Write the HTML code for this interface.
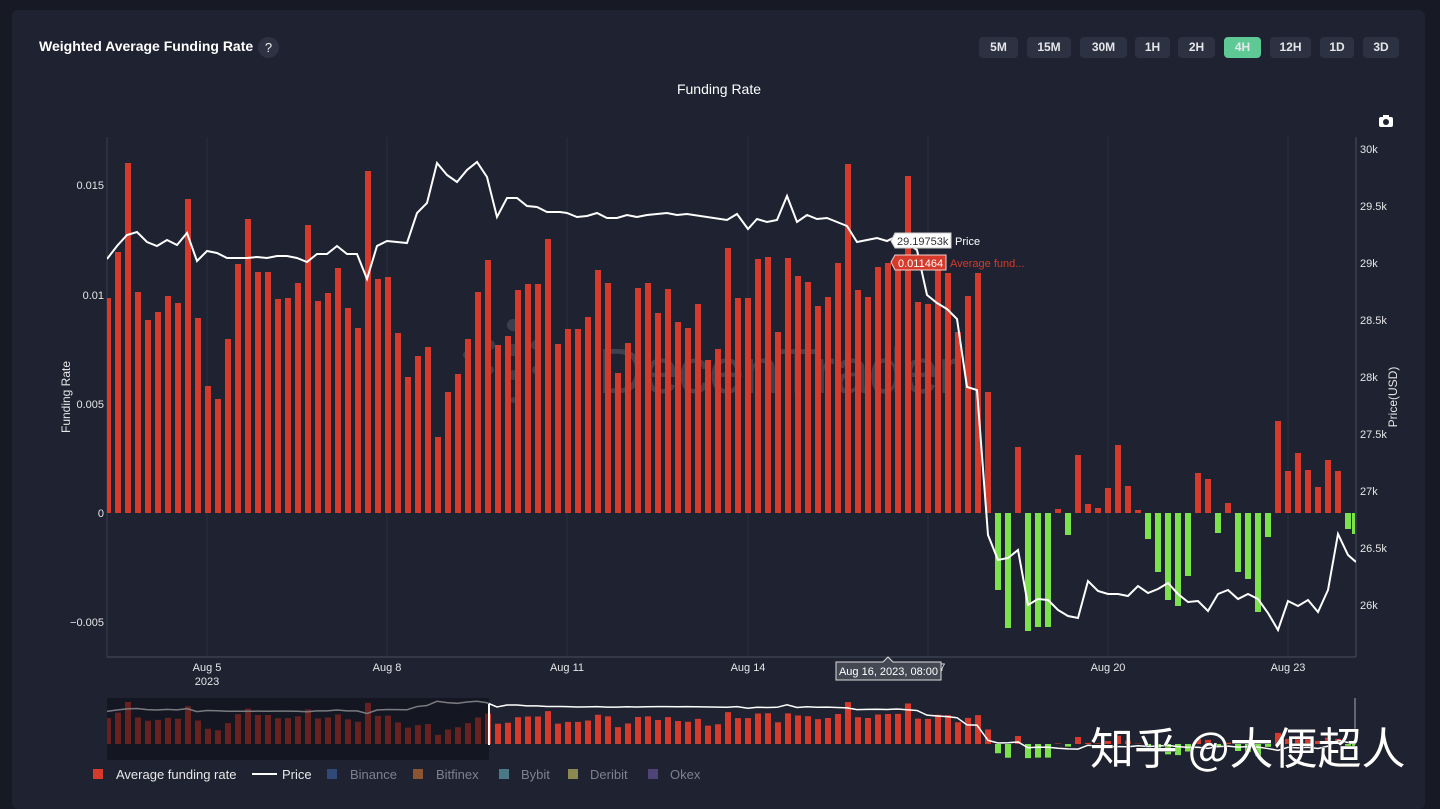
<!DOCTYPE html>
<html><head><meta charset="utf-8"><style>
body{margin:0;width:1440px;height:809px;background:#171a25;overflow:hidden;font-family:"Liberation Sans",sans-serif}
.panel{position:absolute;left:12px;top:10px;width:1413px;height:799px;background:#1e2231;border-radius:6px}
.h{position:absolute;left:39px;top:38px;color:#fff;font-weight:bold;font-size:14px}
.q{position:absolute;left:258px;top:37px;width:21px;height:21px;border-radius:50%;background:#2e3344;color:#eee;font-size:13px;text-align:center;line-height:21px}
.b{position:absolute;top:37px;height:21px;background:#2d3242;border-radius:4px;color:#e4e6ea;font-size:12px;font-weight:bold;text-align:center;line-height:21px}
.b.on{background:#5fc996}
svg{position:absolute;left:0;top:0}
</style></head><body>
<div class="panel"></div>
<div class="h">Weighted Average Funding Rate</div><div class="q">?</div>
<div class="b" style="left:979px;width:39px">5M</div>
<div class="b" style="left:1027px;width:44px">15M</div>
<div class="b" style="left:1080px;width:47px">30M</div>
<div class="b" style="left:1135px;width:35px">1H</div>
<div class="b" style="left:1178px;width:37px">2H</div>
<div class="b on" style="left:1224px;width:37px">4H</div>
<div class="b" style="left:1270px;width:41px">12H</div>
<div class="b" style="left:1320px;width:34px">1D</div>
<div class="b" style="left:1363px;width:36px">3D</div>
<svg width="1440" height="809" viewBox="0 0 1440 809" font-family="Liberation Sans, sans-serif">
<defs><clipPath id="c"><rect x="107" y="130" width="1249" height="640"/></clipPath>
<path id="red" d="M105 513V298h6V513zM115 513V252h6V513zM125 513V163h6V513zM135 513V292h6V513zM145 513V320h6V513zM155 513V312h6V513zM165 513V296h6V513zM175 513V303h6V513zM185 513V199h6V513zM195 513V318h6V513zM205 513V386h6V513zM215 513V399h6V513zM225 513V339h6V513zM235 513V264h6V513zM245 513V219h6V513zM255 513V272h6V513zM265 513V272h6V513zM275 513V299h6V513zM285 513V298h6V513zM295 513V283h6V513zM305 513V225h6V513zM315 513V301h6V513zM325 513V293h6V513zM335 513V268h6V513zM345 513V308h6V513zM355 513V328h6V513zM365 513V171h6V513zM375 513V279h6V513zM385 513V277h6V513zM395 513V333h6V513zM405 513V377h6V513zM415 513V356h6V513zM425 513V347h6V513zM435 513V437h6V513zM445 513V392h6V513zM455 513V374h6V513zM465 513V339h6V513zM475 513V292h6V513zM485 513V260h6V513zM495 513V345h6V513zM505 513V336h6V513zM515 513V290h6V513zM525 513V284h6V513zM535 513V284h6V513zM545 513V239h6V513zM555 513V344h6V513zM565 513V329h6V513zM575 513V329h6V513zM585 513V317h6V513zM595 513V270h6V513zM605 513V283h6V513zM615 513V373h6V513zM625 513V343h6V513zM635 513V288h6V513zM645 513V283h6V513zM655 513V313h6V513zM665 513V289h6V513zM675 513V322h6V513zM685 513V328h6V513zM695 513V304h6V513zM705 513V360h6V513zM715 513V349h6V513zM725 513V248h6V513zM735 513V298h6V513zM745 513V298h6V513zM755 513V259h6V513zM765 513V257h6V513zM775 513V332h6V513zM785 513V258h6V513zM795 513V276h6V513zM805 513V282h6V513zM815 513V306h6V513zM825 513V297h6V513zM835 513V263h6V513zM845 513V164h6V513zM855 513V290h6V513zM865 513V297h6V513zM875 513V267h6V513zM885 513V263h6V513zM895 513V262h6V513zM905 513V176h6V513zM915 513V302h6V513zM925 513V304h6V513zM935 513V270h6V513zM945 513V273h6V513zM955 513V332h6V513zM965 513V296h6V513zM975 513V273h6V513zM985 513V392h6V513zM1015 513V447h6V513zM1055 513V509h6V513zM1075 513V455h6V513zM1085 513V504h6V513zM1095 513V508h6V513zM1105 513V488h6V513zM1115 513V445h6V513zM1125 513V486h6V513zM1135 513V510h6V513zM1195 513V473h6V513zM1205 513V479h6V513zM1225 513V503h6V513zM1275 513V421h6V513zM1285 513V471h6V513zM1295 513V453h6V513zM1305 513V470h6V513zM1315 513V487h6V513zM1325 513V460h6V513zM1335 513V471h6V513z"/>
<path id="grn" d="M995 513V590h6V513zM1005 513V628h6V513zM1025 513V631h6V513zM1035 513V627h6V513zM1045 513V627h6V513zM1065 513V535h6V513zM1145 513V539h6V513zM1155 513V572h6V513zM1165 513V600h6V513zM1175 513V606h6V513zM1185 513V576h6V513zM1215 513V533h6V513zM1235 513V572h6V513zM1245 513V579h6V513zM1255 513V612h6V513zM1265 513V537h6V513zM1345 513V529h6V513zM1352 513V534h3V513z"/>
</defs>
<text x="719" y="94" fill="#fff" font-size="14" text-anchor="middle">Funding Rate</text>
<g fill="#fff"><rect x="1379" y="117" width="14" height="10" rx="2"/><rect x="1383" y="115" width="6" height="3"/><circle cx="1386" cy="122" r="3" fill="#1e2231"/></g>
<g stroke="#2b3040" stroke-width="1"><line x1="207" y1="137" x2="207" y2="657"/><line x1="387" y1="137" x2="387" y2="657"/><line x1="567" y1="137" x2="567" y2="657"/><line x1="748" y1="137" x2="748" y2="657"/><line x1="928" y1="137" x2="928" y2="657"/><line x1="1108" y1="137" x2="1108" y2="657"/><line x1="1288" y1="137" x2="1288" y2="657"/></g>
<line x1="107" y1="657" x2="1356" y2="657" stroke="#4a5060"/><line x1="107" y1="137" x2="107" y2="657" stroke="#3a4050"/><line x1="1356" y1="137" x2="1356" y2="657" stroke="#4a5060"/>
<g opacity="0.13" fill="#fff"><circle cx="490" cy="345" r="5"/><circle cx="513" cy="325" r="6"/><circle cx="513" cy="350" r="6"/><circle cx="513" cy="375" r="5"/><circle cx="536" cy="345" r="5"/><circle cx="467" cy="355" r="4"/><circle cx="490" cy="370" r="4"/><circle cx="536" cy="370" r="4"/><circle cx="513" cy="400" r="3"/></g>
<text x="598" y="393" fill="#fff" opacity="0.14" font-size="64" letter-spacing="-1">Decen<tspan font-weight="100" font-family="DejaVu Sans ExtraLight, Liberation Sans, sans-serif">Trader</tspan></text>
<g clip-path="url(#c)"><use href="#red" fill="#d63a2b"/><use href="#grn" fill="#7be24c"/>
<polyline fill="none" stroke="#fff" stroke-width="2" points="107,259 117,246 127,235 137,232 147,242 157,246 167,240 177,245 187,233 197,261 207,251 217,253 227,258 237,258 247,258 257,257 267,258 277,256 287,256 297,258 307,262 317,254 327,254 337,246 347,254 357,254 367,279 377,246 387,241 397,242 407,243 417,213 427,203 437,163 447,175 457,182 467,170 477,162 487,177 497,217 507,198 517,198 527,206 537,207 547,212 560,212 567,213 577,217 587,216 597,213 607,218 617,218 627,215 637,217 647,215 657,214 667,213 677,215 687,214 727,220 737,214 748,229 757,219 767,222 777,220 787,196 797,222 807,215 817,219 827,218 847,226 857,242 867,240 877,238 887,241 897,236 917,250 927,295 937,303 947,309 957,319 967,387 977,390 988,535 998,560 1008,558 1018,550 1028,605 1038,599 1048,600 1058,610 1068,616 1078,618 1088,581 1098,591 1108,594 1118,594 1128,596 1138,586 1148,593 1158,589 1168,583 1178,594 1188,602 1198,601 1208,611 1218,594 1228,590 1238,599 1248,594 1258,599 1268,613 1278,630 1288,601 1298,606 1308,600 1318,612 1328,590 1338,534 1348,555 1356,562"/>
<rect x="107" y="698" width="1249" height="62" fill="#1e2231"/>
<use href="#red" fill="#d63a2b" transform="matrix(1,0,0,0.12,0,682.4)"/>
<use href="#grn" fill="#7be24c" transform="matrix(1,0,0,0.12,0,682.4)"/>
<polyline fill="none" stroke="#fff" stroke-width="1.5" vector-effect="non-scaling-stroke" transform="matrix(1,0,0,0.105,0,684.2)" points="107,259 117,246 127,235 137,232 147,242 157,246 167,240 177,245 187,233 197,261 207,251 217,253 227,258 237,258 247,258 257,257 267,258 277,256 287,256 297,258 307,262 317,254 327,254 337,246 347,254 357,254 367,279 377,246 387,241 397,242 407,243 417,213 427,203 437,163 447,175 457,182 467,170 477,162 487,177 497,217 507,198 517,198 527,206 537,207 547,212 560,212 567,213 577,217 587,216 597,213 607,218 617,218 627,215 637,217 647,215 657,214 667,213 677,215 687,214 727,220 737,214 748,229 757,219 767,222 777,220 787,196 797,222 807,215 817,219 827,218 847,226 857,242 867,240 877,238 887,241 897,236 917,250 927,295 937,303 947,309 957,319 967,387 977,390 988,535 998,560 1008,558 1018,550 1028,605 1038,599 1048,600 1058,610 1068,616 1078,618 1088,581 1098,591 1108,594 1118,594 1128,596 1138,586 1148,593 1158,589 1168,583 1178,594 1188,602 1198,601 1208,611 1218,594 1228,590 1238,599 1248,594 1258,599 1268,613 1278,630 1288,601 1298,606 1308,600 1318,612 1328,590 1338,534 1348,555 1356,562"/>
<rect x="107" y="698" width="382" height="62" fill="#0c0e16" opacity="0.55"/>
</g>
<line x1="489" y1="704" x2="489" y2="745" stroke="#fff" stroke-width="2"/>
<line x1="1355" y1="698" x2="1355" y2="745" stroke="#aaa" stroke-width="1"/>
<g fill="#e6e6e6" font-size="11" text-anchor="end"><text x="104" y="189">0.015</text><text x="104" y="299">0.01</text><text x="104" y="408">0.005</text><text x="104" y="517">0</text><text x="104" y="626">−0.005</text></g>
<g fill="#e6e6e6" font-size="11"><text x="1360" y="153">30k</text><text x="1360" y="210">29.5k</text><text x="1360" y="267">29k</text><text x="1360" y="324">28.5k</text><text x="1360" y="381">28k</text><text x="1360" y="438">27.5k</text><text x="1360" y="495">27k</text><text x="1360" y="552">26.5k</text><text x="1360" y="609">26k</text></g>
<text transform="translate(70,397) rotate(-90)" fill="#e6e6e6" font-size="12" text-anchor="middle">Funding Rate</text>
<text transform="translate(1397,397) rotate(-90)" fill="#e6e6e6" font-size="12" text-anchor="middle">Price(USD)</text>
<g fill="#e6e6e6" font-size="11" text-anchor="middle"><text x="207" y="671">Aug 5</text><text x="207" y="685">2023</text><text x="387" y="671">Aug 8</text><text x="567" y="671">Aug 11</text><text x="748" y="671">Aug 14</text><text x="928" y="671">Aug 17</text><text x="1108" y="671">Aug 20</text><text x="1288" y="671">Aug 23</text></g>
<path d="M836 662H883L888 657L893 662H941V680H836Z" fill="#444852" stroke="#ddd"/>
<text x="888.5" y="675" fill="#fff" font-size="11" text-anchor="middle">Aug 16, 2023, 08:00</text>
<path d="M895 233H951V248H895L891 241Z" fill="#fff" stroke="#ccc"/>
<text x="897" y="245" fill="#333" font-size="11">29.19753k</text><text x="955" y="245" fill="#fff" font-size="11">Price</text>
<path d="M895 255H946V270H895L891 262Z" fill="#d63a2b" stroke="#f5d0cc"/>
<text x="898" y="267" fill="#fff" font-size="11">0.011464</text><text x="950" y="267" fill="#d63a2b" font-size="11">Average fund...</text>
<g font-size="13"><rect x="93" y="769" width="10" height="10" fill="#d63a2b"/><text x="116" y="779" fill="#e8e8e8">Average funding rate</text>
<line x1="252" y1="774" x2="277" y2="774" stroke="#fff" stroke-width="2"/><text x="282" y="779" fill="#e8e8e8">Price</text>
<rect x="327" y="769" width="10" height="10" fill="#2f4a78"/><text x="350" y="779" fill="#7c8290">Binance</text>
<rect x="413" y="769" width="10" height="10" fill="#8a5530"/><text x="436" y="779" fill="#7c8290">Bitfinex</text>
<rect x="499" y="769" width="10" height="10" fill="#4a7884"/><text x="521" y="779" fill="#7c8290">Bybit</text>
<rect x="568" y="769" width="10" height="10" fill="#8a8a50"/><text x="590" y="779" fill="#7c8290">Deribit</text>
<rect x="648" y="769" width="10" height="10" fill="#4e4478"/><text x="670" y="779" fill="#7c8290">Okex</text></g>
<text x="1090" y="764" fill="#fff" font-size="44" font-family="Noto Sans CJK SC, sans-serif" stroke="#222" stroke-width="0.6" style="paint-order:stroke">知乎 @大便超人</text>
</svg>
</body></html>
